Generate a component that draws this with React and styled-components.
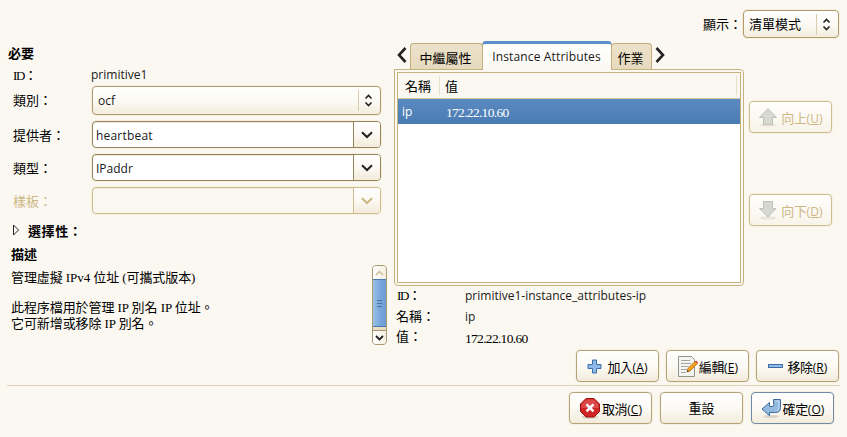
import React from "react";
import styled, { createGlobalStyle, css } from "styled-components";

const Global = createGlobalStyle`
  * { box-sizing: border-box; }
  body { margin: 0; background: #fbf8f1; overflow: hidden; }
`;

const cjk = css`font-family: "Liberation Serif", "Noto Sans CJK TC", sans-serif;`;
const latin = css`font-family: "Open Sans", "Noto Sans CJK TC", sans-serif;`;

const Window = styled.main`
  width: 847px;
  height: 437px;
  display: flex;
  flex-direction: column;
  background: #fbf8f1;
  color: #000;
  font-size: 13px;
  line-height: 16px;
  white-space: nowrap;
  ${cjk}
`;

const Toolbar = styled.header`
  height: 38px;
  padding: 10px 8px 0 0;
  display: flex;
  justify-content: flex-end;
  align-items: center;
  gap: 1px;
`;

const Label = styled.span`
  padding-top: 1px;
`;

const Body = styled.section`
  height: 307px;
  display: grid;
  grid-template-columns: 394px 350px 103px;
`;

const Form = styled.div`
  display: flex;
  flex-direction: column;
`;

const Heading = styled.h2`
  margin: 0;
  padding: ${(p) => p.$y || 0}px 0 0 ${(p) => p.$x}px;
  height: ${(p) => p.$h}px;
  line-height: 18px;
  font-size: 13px;
  font-weight: bold;
  letter-spacing: ${(p) => p.$ls || 0}px;
  display: flex;
  align-items: center;
`;

const Field = styled.div`
  display: grid;
  grid-template-columns: 80px 289px;
  align-items: center;
  padding-left: 12px;
  height: ${(p) => p.$h}px;
  color: ${(p) => (p.$disabled ? "#cdb784" : "#000")};
`;

const FieldLabel = styled.span`
  padding: 2px 0 0 1px;
`;

const Latin = styled.span`
  ${latin}
  font-size: 12px;
  color: ${(p) => p.$color || "#1a1a1a"};
  letter-spacing: ${(p) => p.$ls || 0}px;
`;

const FieldValue = styled(Latin)`
  margin: -3px 0 0 -1px;
`;

const Digits = styled.span`
  font-family: "Liberation Serif", serif;
  font-size: 13.5px;
  letter-spacing: -0.7px;
  padding-top: 3px;
`;

const Tight = styled.span`
  letter-spacing: -1.3px;
  padding-left: 1px;
`;

const Select = styled.div`
  width: ${(p) => p.$w}px;
  height: ${(p) => p.$h}px;
  padding-left: 5px;
  border: 1px solid #b09b68;
  border-radius: 4px;
  background: linear-gradient(#fff, #fcfaf5 50%, #f3eddd);
  box-shadow: 0 0 0 1px #f6f0e3;
  display: flex;
  align-items: center;
  justify-content: space-between;
`;

const SelectHandle = styled.span`
  width: 22px;
  height: 21px;
  border-left: 1px solid #d9ccab;
  display: grid;
  place-items: center;
  padding-right: 3px;
`;

const Combo = styled.div`
  height: 27px;
  display: grid;
  grid-template-columns: 1fr 27px;
  border: 1px solid ${(p) => (p.$disabled ? "#cfbd8e" : "#97855a")};
  border-radius: 4px;
  background: ${(p) => (p.$disabled ? "#fbf8f1" : "#fff")};
  box-shadow: 0 0 0 1px #f6f0e3, inset 0 1px 0 #eee8da;
  overflow: hidden;
  align-items: center;
  padding-left: 3px;
`;

const ComboText = styled(Latin)`
  padding-top: 2px;
`;

const ComboButton = styled.span`
  height: 25px;
  display: grid;
  place-items: center;
  border-left: 1px solid ${(p) => (p.$disabled ? "#cfbd8e" : "#97855a")};
  background: linear-gradient(#fff, #fcf9f3 50%, #f3ebdb);
`;

const Description = styled.div`
  display: flex;
  justify-content: space-between;
  padding: 0 7px 0 11px;
`;

const Prose = styled.div`
  padding-top: 4px;
`;

const Line = styled.p`
  margin: 0 0 ${(p) => p.$gap || 0}px;
  height: 16px;
  line-height: 17px;
  letter-spacing: -0.08px;
`;

const Scrollbar = styled.div`
  width: 15px;
  height: 80px;
  border: 1px solid #aa9a73;
  border-radius: 4px;
  overflow: hidden;
  display: grid;
  grid-template-rows: 13px 48px 3px 14px;
  background: #eadcc3;
`;

const Arrow = styled.span`
  display: grid;
  place-items: center;
  background: linear-gradient(90deg, #fff, #f5eee0);
  border-top: ${(p) => (p.$down ? "1px solid #aa9a73" : "0")};
`;

const Thumb = styled.span`
  margin: 0 -1px;
  border: 1px solid #4a78ae;
  background: linear-gradient(90deg, #9cc1e8, #7aa7dc 50%, #6b9bd2);
  display: grid;
  place-items: center;
`;

const Middle = styled.div`
  display: flex;
  flex-direction: column;
`;

const Tabs = styled.nav`
  height: 31px;
  padding-top: 3px;
  display: flex;
  align-items: flex-end;
`;

const TabArrow = styled.span`
  width: ${(p) => p.$w}px;
  height: 23px;
  padding-left: ${(p) => p.$x}px;
`;

const Tab = styled.span`
  width: ${(p) => p.$w}px;
  height: ${(p) => (p.$active ? 29 : 26)}px;
  display: flex;
  align-items: center;
  justify-content: center;
  border: 1px solid #c3ae7c;
  border-bottom: 0;
  border-radius: 4px 4px 0 0;
  background: linear-gradient(#ece2ca, #e6dabd);
  padding: 4px 2px 0 0;
  ${(p) =>
    p.$active &&
    css`
      margin: 0 -1px -1px;
      border-top: 3px solid #5a8fc8;
      box-shadow: inset 0 1px #fff, 0 -1px #fbf8f1;
      background: linear-gradient(#fff, #fbf8f1);
      padding: 0 1px 0 0;
      z-index: 1;
    `}
`;

const Panel = styled.div`
  height: 217px;
  padding: 2px;
  border: 1px solid #c6b27e;
  border-radius: 0 4px 4px 4px;
  background: #fbf8f1;
`;

const Table = styled.div`
  width: 344px;
  height: 211px;
  border: 1px solid #c6b27e;
  background: #fff;
`;

const TableHead = styled.div`
  height: 26px;
  display: grid;
  grid-template-columns: 42px 297px;
  align-items: center;
  background: #fbf8f1;
  border-bottom: 1px solid #d6c7a1;
`;

const HeadCell = styled.span`
  height: 19px;
  line-height: 21px;
  padding-left: ${(p) => p.$x}px;
  border-right: 1px solid #e6dfcc;
`;

const Row = styled.div`
  height: 25px;
  display: grid;
  grid-template-columns: 44px 1fr;
  align-items: center;
  color: #fff;
  background: linear-gradient(#5a8ac0, #4a7bb3);
  padding-left: 4px;
`;

const Details = styled.div`
  padding-left: 2px;
  display: grid;
  grid-template: repeat(3, 20.5px) / 69px 1fr;
  align-items: center;
`;

const Cell = styled.span`
  line-height: 20px;
`;

const Side = styled.div`
  padding: 63px 0 0 5px;
  display: flex;
  flex-direction: column;
  gap: 61px;
`;

const Button = styled.button`
  width: 83px;
  height: 32px;
  padding: 3px 0 0;
  margin: 0;
  flex: none;
  display: flex;
  align-items: center;
  justify-content: center;
  gap: ${(p) => p.$gap || 0}px;
  border: 1px solid ${(p) => (p.$primary ? "#7089a6" : p.disabled ? "#cfbd8e" : "#b5a377")};
  border-radius: 4px;
  background: ${(p) => (p.disabled ? "linear-gradient(#fffefc, #f8f4ea)" : "linear-gradient(#fff, #fcfaf5 50%, #f3ecdc)")};
  box-shadow: 0 0 0 1px #f6f0e3;
  color: ${(p) => (p.disabled ? "#cdb784" : "#000")};
  font-size: 13px;
  line-height: 16px;
  white-space: nowrap;
  ${cjk}
  svg { flex: none; margin-top: -3px; }
`;

const ResetText = styled.span`
  margin-top: -2px;
`;

const Caption = styled.span`
  letter-spacing: -0.4px;
`;

const Key = styled.span`
  ${latin}
  font-size: 12px;
  letter-spacing: 0.1px;
  u { text-underline-offset: 1px; }
`;

const Actions = styled.div`
  height: 37px;
  padding: 5px 8px 0 0;
  display: flex;
  justify-content: flex-end;
  gap: 7px;
`;

const Footer = styled.footer`
  margin: 3px 7px 0;
  padding: 6px 6px 0 0;
  border-top: 1px solid #ded3b9;
  display: flex;
  justify-content: flex-end;
  gap: 8px;
`;

const Stroke = ({ d, w, h, color = "#222", width = 2 }) => (
  <svg width={w} height={h} viewBox={`0 0 ${w} ${h}`} fill="none" stroke={color} strokeWidth={width}>
    <path d={d} />
  </svg>
);

const UpDown = () => <Stroke w={9} h={13} d="M1.5 4.5 4.5 1.5l3 3M1.5 8.5l3 3 3-3" width={1.6} />;
const Down = ({ color }) => <Stroke w={12} h={8} d="M1 1.2 6 6l5-4.8" color={color} />;

const ArrowIcon = ({ down }) => (
  <svg width="20" height="20" viewBox="0 0 20 20">
    <ellipse cx="10" cy="18" rx="8" ry="1.6" fill="#e9e5da" />
    <path
      d={down ? "M5.5 1.5h9v7H18L10 17 1.5 8.5H5.5Z" : "M10 1.5 18.5 10.5H14.5V17.5H5.5V10.5H1.5Z"}
      fill="#d6d8d2"
      stroke="#bfc1ba"
    />
  </svg>
);

const PlusIcon = () => (
  <svg width="15" height="15" viewBox="0 0 15 15">
    <path d="M5.5 1h4v4.5H14v4H9.5V14h-4V9.5H1v-4h4.5Z" fill="#8fb9e6" stroke="#3d6ea9" />
  </svg>
);

const MinusIcon = () => (
  <svg width="15" height="15" viewBox="0 0 15 15">
    <rect x=".5" y="5.5" width="14" height="3" fill="#8fb9e6" stroke="#3d6ea9" />
  </svg>
);

const EditIcon = () => (
  <svg width="21" height="23" viewBox="0 0 21 23">
    <path d="M1.5 1.5h13l3 3v17h-16Z" fill="#f4f4f2" stroke="#92948f" />
    <path d="M4 5.5h9M4 8.5h10M4 11.5h8M4 14.5h6M4 17.5h5" stroke="#a5a7a2" />
    <path d="m10 17 1-3.5L18 6.5l2.500 2L13 16Z" fill="#f7a21b" stroke="#b46a08" strokeWidth=".8" />
    <path d="m18 6.5 1.200-1 1.800 1.700-.8 1.300Z" fill="#dd4b3e" />
    <path d="m10 17 .6-2 1.300 1.200Z" fill="#333" />
  </svg>
);

const CancelIcon = () => (
  <svg width="22" height="22" viewBox="0 0 22 22">
    <ellipse cx="11" cy="20" rx="8" ry="1.7" fill="#d3cec2" />
    <path d="M7 1.5h8l5.500 5.500v7.500L15 20H7l-5.500-5.500V7Z" fill="#cf2525" stroke="#a11010" />
    <path d="M7.400 2.500h7.200l4.900 4.900V11H2.500V7.400Z" fill="#e05a5a" opacity=".7" />
    <path d="m7.500 7.300 7 7m0-7-7 7" stroke="#fff" strokeWidth="2.6" />
  </svg>
);

const OkIcon = () => (
  <svg width="21" height="21" viewBox="0 0 21 21">
    <ellipse cx="10" cy="18.5" rx="8" ry="1.6" fill="#d9d5cb" />
    <path
      d="M8.500 4.500V8.500H11q2 0 2-2V5.500h-.5v-4h7V9.500q0 5-5 5H8.500v3.200L1 11Z"
      fill="#94badf"
      stroke="#3c6b9f"
      strokeLinejoin="round"
    />
    <path d="M14.500 3h3.500v6.500q0 2.500-2.500 3.500" fill="none" stroke="#c5dcf2" />
  </svg>
);

const KeyCaption = ({ text, k }) => (
  <Caption>
    {text}
    <Key>
      (<u>{k}</u>)
    </Key>
  </Caption>
);

const ComboField = ({ label, value, h, ls = 0.2, disabled }) => (
  <Field $h={h} $disabled={disabled}>
    <FieldLabel>{label}</FieldLabel>
    <Combo $disabled={disabled}>
      <ComboText $ls={ls}>{value}</ComboText>
      <ComboButton $disabled={disabled}>
        <Down color={disabled ? "#cdb784" : "#222"} />
      </ComboButton>
    </Combo>
  </Field>
);

export default function App() {
  return (
    <Window>
      <Global />
      <Toolbar>
        <Label>顯示：</Label>
        <Select $w={96} $h={28}>
          <Label>清單模式</Label>
          <SelectHandle><UpDown /></SelectHandle>
        </Select>
      </Toolbar>
      <Body>
        <Form>
          <Heading $x={8} $y={1} $h={30}>必要</Heading>
          <Field $h={14}>
            <span><Tight>ID</Tight>：</span>
            <FieldValue>primitive1</FieldValue>
          </Field>
          <Field $h={36}>
            <FieldLabel>類別：</FieldLabel>
            <Select $w={289} $h={29}>
              <ComboText>ocf</ComboText>
              <SelectHandle><UpDown /></SelectHandle>
            </Select>
          </Field>
          <ComboField label="提供者：" value="heartbeat" h={33} />
          <ComboField label="類型：" value="IPaddr" h={33} ls={0} />
          <ComboField label="樣板：" value="" h={33} disabled />
          <Heading $x={12} $y={3} $h={27} $ls={0.6}>
            <svg width="16" height="16" viewBox="0 0 16 16" fill="#fff" stroke="#222">
              <path d="M1.5 1v10l5-5Z" />
            </svg>
            選擇性：
          </Heading>
          <Heading $x={11} $y={1} $h={21}>描述</Heading>
          <Description>
            <Prose>
              <Line $gap={14}>管理虛擬 IPv4 位址 (可攜式版本)</Line>
              <Line>此程序檔用於管理 IP 別名 IP 位址。</Line>
              <Line>它可新增或移除 IP 別名。</Line>
            </Prose>
            <Scrollbar>
              <Arrow><Stroke w={9} h={6} d="M1 5l3.500-3.500L8 5" color="#cdbb90" width={1.5} /></Arrow>
              <Thumb><Stroke w={5} h={9} d="M0 1.500h5M0 4.500h5M0 7.500h5" color="#45719f" width={1} /></Thumb>
              <span />
              <Arrow $down><Stroke w={9} h={6} d="M1 1l3.500 3.500L8 1" width={1.8} /></Arrow>
            </Scrollbar>
          </Description>
        </Form>
        <Middle>
          <Tabs>
            <TabArrow $w={16} $x={2}><Stroke w={11} h={18} d="M9.500 2 3 9l6.500 7" width={2.6} /></TabArrow>
            <Tab $w={73}>中繼屬性</Tab>
            <Tab $w={130} $active><Latin $ls={0.15}>Instance Attributes</Latin></Tab>
            <Tab $w={41}>作業</Tab>
            <TabArrow $w={16} $x={3}><Stroke w={11} h={18} d="M1.500 2 8 9l-6.500 7" width={2.6} /></TabArrow>
          </Tabs>
          <Panel>
            <Table>
              <TableHead>
                <HeadCell $x={7}>名稱</HeadCell>
                <HeadCell $x={5}>值</HeadCell>
              </TableHead>
              <Row>
                <Latin $color="#fff">ip</Latin>
                <Digits>172.22.10.60</Digits>
              </Row>
            </Table>
          </Panel>
          <Details>
            <Cell><Tight>ID</Tight>：</Cell>
            <Latin>primitive1-instance_attributes-ip</Latin>
            <Cell>名稱：</Cell>
            <Latin>ip</Latin>
            <Cell>值：</Cell>
            <Digits>172.22.10.60</Digits>
          </Details>
        </Middle>
        <Side>
          <Button disabled $gap={3}><ArrowIcon /><KeyCaption text="向上" k="U" /></Button>
          <Button disabled $gap={3}><ArrowIcon down /><KeyCaption text="向下" k="D" /></Button>
        </Side>
      </Body>
      <Actions>
        <Button $gap={5}><PlusIcon /><KeyCaption text="加入" k="A" /></Button>
        <Button $gap={1}><EditIcon /><KeyCaption text="編輯" k="E" /></Button>
        <Button $gap={5}><MinusIcon /><KeyCaption text="移除" k="R" /></Button>
      </Actions>
      <Footer>
        <Button $gap={1}><CancelIcon /><KeyCaption text="取消" k="C" /></Button>
        <Button><ResetText>重設</ResetText></Button>
        <Button $primary $gap={1}><OkIcon /><KeyCaption text="確定" k="O" /></Button>
      </Footer>
    </Window>
  );
}
